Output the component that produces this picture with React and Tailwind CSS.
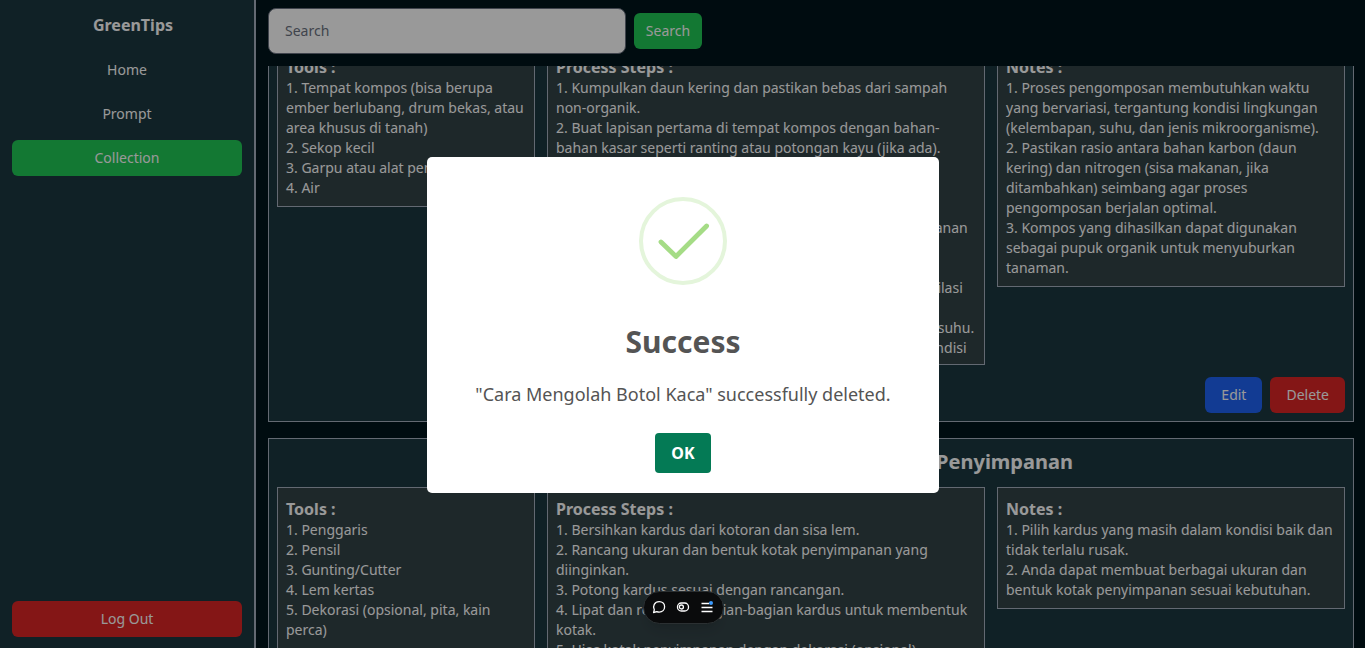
import React from "react";

const card1 = {
  title: "Cara Membuat Kompos dari Daun Kering",
  tools: [
    "1. Tempat kompos (bisa berupa",
    "ember berlubang, drum bekas, atau",
    "area khusus di tanah)",
    "2. Sekop kecil",
    "3. Garpu atau alat pengaduk",
    "4. Air",
  ],
  steps: [
    "1. Kumpulkan daun kering dan pastikan bebas dari sampah",
    "non-organik.",
    "2. Buat lapisan pertama di tempat kompos dengan bahan-",
    "bahan kasar seperti ranting atau potongan kayu (jika ada).",
    "3. Tambahkan lapisan daun kering setebal 10-15 cm.",
    "4. Siram dengan air hingga lembap, jangan basah.",
    "5. Ulangi lapisan hingga tempat kompos penuh.",
    "6. Jika tersedia, tambahkan juga tanah serta sisa-sisa makanan",
    "di antara lapisan daun.",
    "7. Tutup tempat kompos.",
    "8. Balikkan kompos setiap satu minggu agar sirkulasi ventilasi",
    "udara merata.",
    "9. Periksa secara berkala kelembapan tumpukan maupun suhu.",
    "10. Kompos akan siap setelah beberapa bulan, dengan kondisi",
  ],
  notes: [
    "1. Proses pengomposan membutuhkan waktu",
    "yang bervariasi, tergantung kondisi lingkungan",
    "(kelembapan, suhu, dan jenis mikroorganisme).",
    "2. Pastikan rasio antara bahan karbon (daun",
    "kering) dan nitrogen (sisa makanan, jika",
    "ditambahkan) seimbang agar proses",
    "pengomposan berjalan optimal.",
    "3. Kompos yang dihasilkan dapat digunakan",
    "sebagai pupuk organik untuk menyuburkan",
    "tanaman.",
  ],
};

const card2 = {
  title: "Cara Mengubah Kardus Menjadi Kotak Penyimpanan",
  tools: [
    "1. Penggaris",
    "2. Pensil",
    "3. Gunting/Cutter",
    "4. Lem kertas",
    "5. Dekorasi (opsional, pita, kain",
    "perca)",
  ],
  steps: [
    "1. Bersihkan kardus dari kotoran dan sisa lem.",
    "2. Rancang ukuran dan bentuk kotak penyimpanan yang",
    "diinginkan.",
    "3. Potong kardus sesuai dengan rancangan.",
    "4. Lipat dan rekatkan bagian-bagian kardus untuk membentuk",
    "kotak.",
    "5. Hias kotak penyimpanan dengan dekorasi (opsional).",
  ],
  notes: [
    "1. Pilih kardus yang masih dalam kondisi baik dan",
    "tidak terlalu rusak.",
    "2. Anda dapat membuat berbagai ukuran dan",
    "bentuk kotak penyimpanan sesuai kebutuhan.",
  ],
};

function Box({ heading, lines, className }) {
  return (
    <section
      className={`max-h-80 shrink-0 self-start overflow-hidden border border-[#a5b0bf] bg-[#334347] p-2 ${className}`}
    >
      <h3 className="h-6 pt-px text-base font-bold leading-6">{heading}</h3>
      {lines.map((l) => (
        <p key={l} className="whitespace-nowrap">
          {l}
        </p>
      ))}
    </section>
  );
}

function Card({ data }) {
  return (
    <article className="shrink-0 border border-[#a5b0bf] bg-[#1c3840] p-2">
      <h2 className="mb-[11px] pt-px text-center text-xl font-bold leading-7">{data.title}</h2>
      <div className="flex gap-3">
        <Box heading="Tools :" lines={data.tools} className="w-[258px]" />
        <Box heading="Process Steps :" lines={data.steps} className="w-[438px]" />
        <Box heading="Notes :" lines={data.notes} className="w-[348px]" />
      </div>
      <div className="mt-3 flex justify-end gap-2">
        <button className="h-9 rounded-md bg-[#1e63f5] px-4">Edit</button>
        <button className="h-9 rounded-md bg-[#dc2626] px-4">Delete</button>
      </div>
    </article>
  );
}

function Toolbar() {
  return (
    <div className="fixed left-[643px] top-[591px] flex h-[33px] w-[81px] items-center justify-center gap-2 rounded-full border border-[#2b3032] bg-[#0a0b0c] pb-px pr-px text-white shadow-lg">
      <svg width="16" height="16" viewBox="0 0 16 16" fill="none" stroke="currentColor" strokeWidth="1.3">
        <path
          d="M2.600 13.500 3.300 10.800C1.400 7.200 3.500 2.600 8.200 2.600c3.200 0 5.400 2.200 5.400 5.200s-2.200 5.300-5.400 5.300c-.9 0-1.700-.2-2.400-.5z"
          strokeLinejoin="round"
        />
      </svg>
      <svg width="16" height="16" viewBox="0 0 16 16" fill="none" stroke="currentColor" strokeWidth="1.3">
        <rect x="2.500" y="4" width="11" height="8" rx="3.800" />
        <circle cx="6.400" cy="8" r="2" />
      </svg>
      <svg width="16" height="16" viewBox="0 0 16 16" fill="none" stroke="currentColor" strokeWidth="1.3">
        <path d="M2.500 4.500H10M2.500 8.500h11M2.500 12.500h11" />
        <circle cx="12" cy="4" r="2" fill="#3b9bff" stroke="none" />
      </svg>
    </div>
  );
}

function Modal() {
  return (
    <div className="fixed inset-0 flex items-center justify-center bg-black/40 pl-px pt-[2px]">
      <div className="flex h-[336px] w-[512px] flex-col items-center rounded-[5px] bg-white pt-10 text-[#545454]">
        <svg width="88" height="88" viewBox="0 0 88 88" fill="none">
          <circle cx="44" cy="44" r="42" stroke="#e4f5db" strokeWidth="4" />
          <path
            d="M22 45 37 59.500 67.600 29"
            stroke="#a5dc86"
            strokeWidth="4.800"
            strokeLinecap="round"
            strokeLinejoin="round"
          />
        </svg>
        <h2 className="mt-[39px] text-[30px] font-bold leading-9">Success</h2>
        <p className="mt-5 text-lg leading-7">"Cara Mengolah Botol Kaca" successfully deleted.</p>
        <button className="mt-[25px] h-10 w-14 rounded bg-[#047a55] text-base font-bold text-white">OK</button>
      </div>
    </div>
  );
}

export default function App() {
  return (
    <div className="flex h-[648px] w-[1365px] overflow-hidden bg-[#00141b] font-['Noto_Sans',sans-serif] text-sm leading-5 text-white">
      <aside className="flex w-64 shrink-0 flex-col border-r-2 border-[#a5b0bf] bg-[#1c3840] px-3 pb-[11px] pt-[13px] text-center">
        <h1 className="mb-[15px] pl-3 text-base font-bold leading-6">GreenTips</h1>
        <nav className="flex flex-col gap-2">
          <a className="rounded-md py-2">Home</a>
          <a className="rounded-md py-2">Prompt</a>
          <a className="rounded-md bg-[#20c855] py-2">Collection</a>
        </nav>
        <button className="mt-auto rounded-md bg-[#dc2626] py-2">Log Out</button>
      </aside>
      <main className="flex min-w-0 flex-1 flex-col">
        <header className="flex h-[66px] shrink-0 items-center gap-2 px-3 pb-1">
          <input
            className="h-[46px] w-[358px] rounded-lg border border-[#6b7280] bg-white px-4 pb-0.5 placeholder:text-[#6b7280]"
            placeholder="Search"
          />
          <button className="h-9 w-[68px] rounded-md bg-[#20c855]">Search</button>
        </header>
        <div className="flex min-h-0 flex-1 flex-col overflow-hidden pl-3 pr-[11px]">
          <div className="-mt-[70px] flex flex-col gap-4">
            <Card data={card1} />
            <Card data={card2} />
          </div>
        </div>
      </main>
      <Modal />
      <Toolbar />
    </div>
  );
}
